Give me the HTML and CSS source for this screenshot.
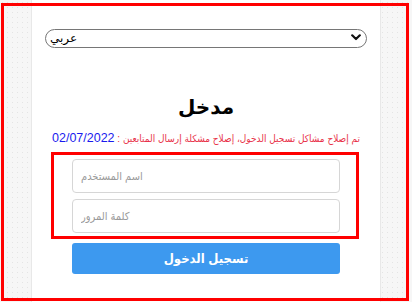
FILE: index.html
```html
<!DOCTYPE html>
<html lang="ar">
<head>
<meta charset="utf-8">
<title>مدخل</title>
<link rel="stylesheet" href="styles.css">
</head>
<body>
<div class="page">
  <div class="lang">
    <select class="lang-select">
      <option>عربي</option>
      <option>English</option>
    </select>
    <svg class="chev" width="10" height="7" viewBox="0 0 10 7"><path d="M1.2 1.3 L5 5 L8.8 1.3" fill="none" stroke="#111" stroke-width="2.2" stroke-linecap="round" stroke-linejoin="round"/></svg>
  </div>
  <h1 class="title">مدخل</h1>
  <p class="notice"><span class="notice-text">تم إصلاح مشاكل تسجيل الدخول، إصلاح مشكلة إرسال المتابعين :</span> <span class="notice-date">02/07/2022</span></p>
  <div class="creds">
    <input class="field" type="text" placeholder="اسم المستخدم">
    <input class="field" type="password" placeholder="كلمة المرور">
  </div>
  <button class="login">تسجيل الدخول</button>
</div>
<div class="frame"></div>
</body>
</html>
```
FILE: styles.css
```css
html, body {
  margin: 0;
  padding: 0;
}
body {
  width: 412px;
  height: 302px;
  overflow: hidden;
  position: relative;
  font-family: Arial, "Liberation Sans", "DejaVu Sans Condensed", "DejaVu Sans", sans-serif;
  background-color: #f6f6f6;
  background-image: radial-gradient(#e4e4e4 0.6px, transparent 0.9px);
  background-size: 5px 5px;
}
.page {
  box-sizing: border-box;
  width: 350px;
  height: 302px;
  margin: 0 0 0 31px;
  background: #fff;
  border-left: 1px solid #e8e8e8;
  border-right: 1px solid #e8e8e8;
  padding-top: 28px;
  display: flex;
  flex-direction: column;
  align-items: center;
}
.lang {
  position: relative;
  width: 322px;
  height: 19px;
}
.lang-select {
  appearance: none;
  -webkit-appearance: none;
  box-sizing: border-box;
  width: 322px;
  height: 19px;
  border: 1px solid #767676;
  border-radius: 10px;
  background: #fff;
  font-family: Arial, "DejaVu Sans", sans-serif;
  font-size: 12px;
  color: #000;
  padding: 0 4px;
  margin: 0;
  direction: ltr;
}
.chev {
  position: absolute;
  right: 6px;
  top: 6px;
}
.title {
  margin: 45px 0 0;
  font-family: "Liberation Sans", "DejaVu Sans", sans-serif;
  font-size: 20px;
  font-weight: bold;
  line-height: 30px;
  color: #000;
}
.notice {
  margin: 9px 0 0;
  font-size: 10px;
  line-height: 15px;
  direction: rtl;
  white-space: nowrap;
  font-family: "Liberation Sans", "DejaVu Sans Condensed", sans-serif;
}
.notice-text {
  color: #e8334a;
}
.notice-date {
  color: #1a1aee;
  font-size: 12.5px;
}
.creds {
  box-sizing: border-box;
  align-self: flex-start;
  margin: 6px 0 0 19px;
  width: 308px;
  border: 3px solid #ff0000;
  padding: 4px 16px 3px 18px;
  display: flex;
  flex-direction: column;
  gap: 6px;
}
.field {
  box-sizing: border-box;
  width: 268px;
  height: 34px;
  border: 1px solid #d6d6d6;
  border-radius: 4px;
  padding: 0 8px;
  margin: 0;
  font-family: "Liberation Sans", "DejaVu Sans Condensed", sans-serif;
  font-size: 11px;
  background: #fff;
}
.field::placeholder {
  color: #9a9a9a;
}
.login {
  box-sizing: border-box;
  margin-top: 4px;
  width: 268px;
  height: 31px;
  border: none;
  border-radius: 3px;
  background: #3d99ef;
  color: #fff;
  font-family: "Liberation Sans", "DejaVu Sans Condensed", sans-serif;
  font-size: 13px;
  font-weight: bold;
}
.frame {
  position: absolute;
  left: 1px;
  top: 3px;
  width: 402px;
  height: 292px;
  border: 3px solid #ff0000;
  pointer-events: none;
}
```
